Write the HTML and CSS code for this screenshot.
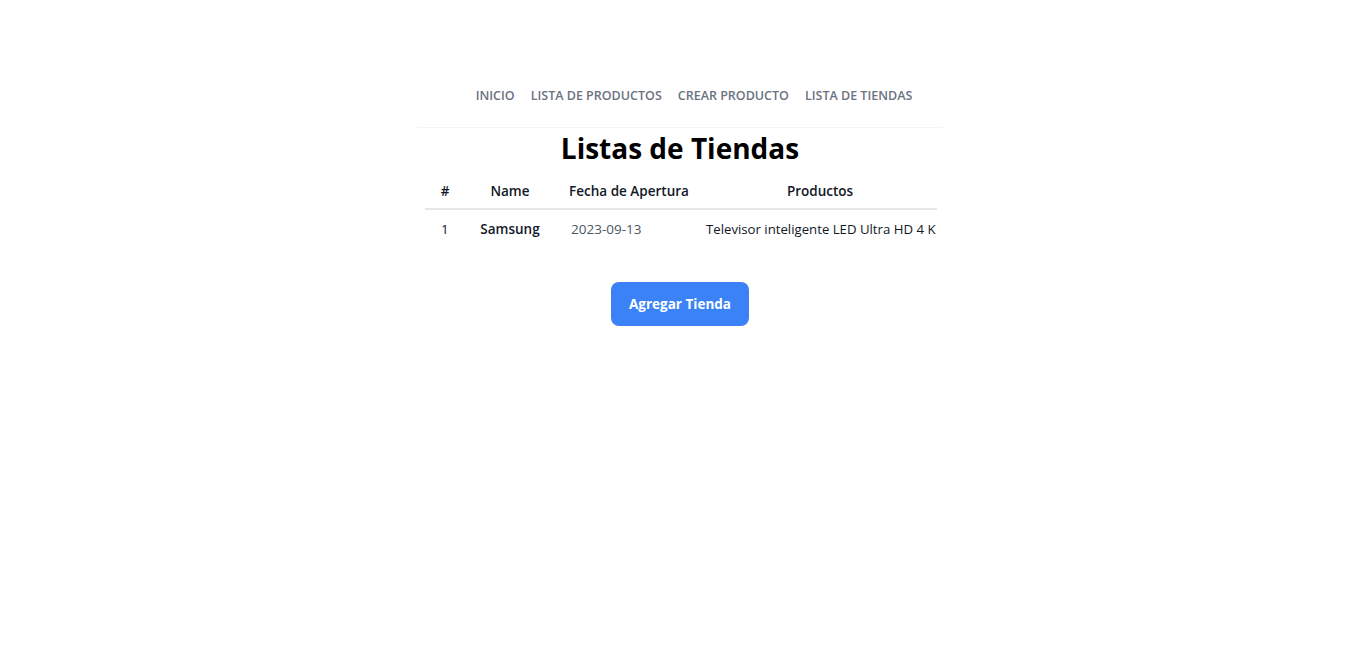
FILE: index.html
```html
<!DOCTYPE html>
<html lang="es">
<head>
<meta charset="utf-8">
<title>Listas de Tiendas</title>
<link rel="stylesheet" href="styles.css">
</head>
<body>
<div class="page">
  <div class="container">
    <header class="topbar">
      <nav class="nav">
        <a href="#" class="nav-link">INICIO</a>
        <a href="#" class="nav-link">LISTA DE PRODUCTOS</a>
        <a href="#" class="nav-link">CREAR PRODUCTO</a>
        <a href="#" class="nav-link">LISTA DE TIENDAS</a>
      </nav>
    </header>
    <main class="content">
      <h1 class="title">Listas de Tiendas</h1>
      <div class="table-wrap">
        <table class="stores">
          <colgroup>
            <col class="c-num"><col class="c-name"><col class="c-date"><col class="c-prod">
          </colgroup>
          <thead>
            <tr>
              <th>#</th>
              <th>Name</th>
              <th>Fecha de Apertura</th>
              <th>Productos</th>
            </tr>
          </thead>
          <tbody>
            <tr>
              <td class="num">1</td>
              <td class="name">Samsung</td>
              <td class="date">2023-09-13</td>
              <td class="prod">Televisor inteligente LED Ultra HD 4 K</td>
            </tr>
          </tbody>
        </table>
      </div>
      <div class="actions">
        <button class="btn" type="button">Agregar Tienda</button>
      </div>
    </main>
  </div>
</div>
</body>
</html>
```
FILE: styles.css
```css
html, body {
  margin: 0;
  padding: 0;
  background: #ffffff;
}
body {
  font-family: "Open Sans", "Noto Sans", "Liberation Sans", sans-serif;
  color: #111827;
}
.page {
  padding-right: 4px;
}
.container {
  width: 526px;
  margin: 0 auto;
}
.topbar {
  padding-top: 86px;
  height: 41px;
  border-bottom: 1px solid #f3f4f6;
}
.nav {
  display: flex;
  justify-content: center;
  gap: 16px;
  padding-left: 28px;
}
.nav-link {
  font-size: 12.5px;
  font-weight: 600;
  color: #6b7280;
  text-decoration: none;
  line-height: 20px;
}
.content {
  display: flex;
  flex-direction: column;
  align-items: center;
}
.title {
  margin: 0;
  font-size: 28px;
  font-weight: 700;
  color: #000000;
  line-height: 40px;
}
.table-wrap {
  width: 512px;
  margin-top: 6px;
  padding-left: 2px;
}
.stores {
  border-collapse: collapse;
  table-layout: fixed;
  width: 512px;
  font-size: 13.5px;
}
.c-num { width: 40px; }
.c-name { width: 90px; }
.c-date { width: 148px; }
.c-prod { width: 234px; }
.stores th {
  font-weight: 600;
  text-align: center;
  padding: 0;
  height: 34px;
  border-bottom: 2px solid #e5e7eb;
  white-space: nowrap;
}
.stores td {
  padding: 0;
  height: 37px;
  text-align: left;
  white-space: nowrap;
}
.stores td.num { padding-left: 16px; color: #111827; }
.stores td.name { text-align: center; font-weight: 600; color: #111827; }
.stores td.date { padding-left: 16px; color: #4b5563; }
.stores td.prod { padding-left: 3px; color: #111827; font-size: 13.2px; }
.actions {
  margin-top: 35px;
}
.btn {
  font-family: inherit;
  background: #3b82f6;
  color: #ffffff;
  border: none;
  border-radius: 8px;
  width: 138px;
  height: 44px;
  font-size: 13.5px;
  font-weight: 700;
  cursor: pointer;
}
```
